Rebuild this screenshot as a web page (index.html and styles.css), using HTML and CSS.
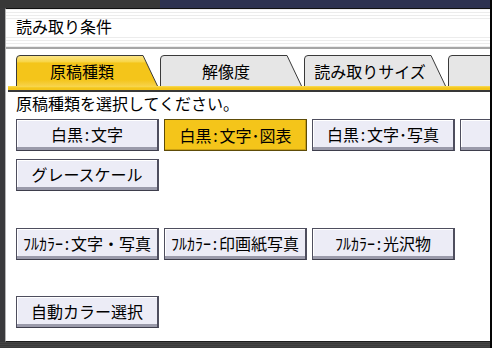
FILE: index.html
```html
<!DOCTYPE html>
<html lang="ja">
<head>
<meta charset="utf-8">
<title>読み取り条件</title>
<link rel="stylesheet" href="styles.css">
</head>
<body>
<div class="screen">
  <div class="topband"></div>
  <div class="window">
    <div class="titlebar">読み取り条件</div>
    <div class="tabbar">
      <div class="tabs">
        <div class="tab active">
          <svg class="tab-shape" width="142" height="31" viewBox="0 0 142 31">
            <defs>
              <linearGradient id="gy" x1="0" y1="0" x2="0" y2="1">
                <stop offset="0" stop-color="#fbe58a"/>
                <stop offset="0.2" stop-color="#f8d64a"/>
                <stop offset="0.25" stop-color="#f4c51a"/>
                <stop offset="0.8" stop-color="#f4c51a"/>
                <stop offset="1" stop-color="#f7d24a"/>
              </linearGradient>
            </defs>
            <path d="M0.5 31 V4 Q0.5 0.5 4 0.5 H127 L141.5 31" fill="url(#gy)" stroke="#3a3a3a" stroke-width="1"/>
          </svg>
          <span class="tab-label">原稿種類</span>
        </div>
        <div class="tab">
          <svg class="tab-shape" width="142" height="31" viewBox="0 0 142 31">
            <path d="M0.5 31 V4 Q0.5 0.5 4 0.5 H127 L141.5 31" fill="#e6e6e6" stroke="#3a3a3a" stroke-width="1"/>
          </svg>
          <span class="tab-label">解像度</span>
        </div>
        <div class="tab">
          <svg class="tab-shape" width="142" height="31" viewBox="0 0 142 31">
            <path d="M0.5 31 V4 Q0.5 0.5 4 0.5 H127 L141.5 31" fill="#e6e6e6" stroke="#3a3a3a" stroke-width="1"/>
          </svg>
          <span class="tab-label">読み取りサイズ</span>
        </div>
        <div class="tab">
          <svg class="tab-shape" width="142" height="31" viewBox="0 0 142 31">
            <path d="M0.5 31 V4 Q0.5 0.5 4 0.5 H127 L141.5 31" fill="#e6e6e6" stroke="#3a3a3a" stroke-width="1"/>
          </svg>
          <span class="tab-label">編集</span>
        </div>
      </div>
      <div class="tabline"></div>
    </div>
    <div class="prompt">原稿種類を選択してください。</div>
    <div class="options">
      <div class="row">
        <div class="btn">白黒<span class="hc">:</span>文字</div>
        <div class="btn selected">白黒<span class="hc">:</span>文字･図表</div>
        <div class="btn">白黒<span class="hc">:</span>文字･写真</div>
        <div class="btn">白黒<span class="hc">:</span>写真</div>
      </div>
      <div class="row row-near">
        <div class="btn">グレースケール</div>
      </div>
      <div class="row row-far">
        <div class="btn">ﾌﾙｶﾗｰ<span class="hc">:</span>文字・写真</div>
        <div class="btn">ﾌﾙｶﾗｰ<span class="hc">:</span>印画紙写真</div>
        <div class="btn">ﾌﾙｶﾗｰ<span class="hc">:</span>光沢物</div>
      </div>
      <div class="row row-far2">
        <div class="btn">自動カラー選択</div>
      </div>
    </div>
  </div>
  <div class="bottomband"></div>
</div>
</body>
</html>
```

FILE: styles.css
```css
html, body {
  margin: 0;
  padding: 0;
}

body {
  width: 492px;
  height: 348px;
  overflow: hidden;
  font-family: "Noto Sans CJK JP", "Noto Sans", sans-serif;
  color: #000;
}

.screen {
  width: 492px;
  height: 348px;
  box-sizing: border-box;
  display: flex;
  flex-direction: column;
  background: #3a3a3c;
  border-right: 2px solid #050505;
}

.topband {
  height: 8px;
  flex: none;
  background: linear-gradient(to right, #383838 0, #383838 160px, #2d3250 160px);
}

.window {
  flex: 1;
  min-height: 0;
  margin-left: 5px;
  border-left: 1px solid #b4b4b4;
  border-top: 1px solid #111;
  border-bottom: 1px solid #1c1c1c;
  background: #fff;
  display: flex;
  flex-direction: column;
  overflow: hidden;
}

.bottomband {
  height: 6px;
  flex: none;
  background: repeating-linear-gradient(to bottom, #444 0, #444 1px, #3a3a3a 1px, #3a3a3a 2px);
}

.titlebar {
  height: 38px;
  box-sizing: content-box;
  padding: 0 10px;
  border-bottom: 2px solid #a6a6a6;
  font-size: 16px;
  line-height: 34px;
  flex: none;
  background:
    repeating-linear-gradient(to bottom, #ececec 0, #ececec 1px, #fff 1px, #fff 3px) top / 100% 10px no-repeat,
    repeating-linear-gradient(to bottom, #ececec 0, #ececec 1px, #fff 1px, #fff 3px) bottom / 100% 10px no-repeat,
    #fff;
}

.tabbar {
  margin: 6px 0 0 2px;
  flex: none;
}

.tabs {
  display: flex;
  gap: 2px;
  padding-left: 8px;
  height: 31px;
}

.tab {
  display: grid;
  width: 142px;
  height: 31px;
  flex: none;
}

.tab > * {
  grid-area: 1 / 1;
}

.tab-shape {
  display: block;
}

.tab-label {
  align-self: center;
  justify-self: center;
  padding-right: 10px;
  font-size: 16px;
  line-height: 20px;
  white-space: nowrap;
}

.tabline {
  height: 4px;
  background: linear-gradient(to bottom, #f9dc5a 0, #f4c51a 2px);
  border-bottom: 2px solid #383838;
}

.prompt {
  margin-top: 1px;
  padding-left: 10px;
  font-size: 16px;
  line-height: 20px;
  white-space: nowrap;
  flex: none;
}

.options {
  display: flex;
  flex-direction: column;
  padding-left: 10px;
  margin-top: 6px;
}

.row {
  display: flex;
  gap: 5px;
}

.row-near {
  margin-top: 8px;
}

.row-far {
  margin-top: 37px;
}

.row-far2 {
  margin-top: 36px;
}

.btn {
  width: 143px;
  height: 32px;
  flex: none;
  box-sizing: border-box;
  display: flex;
  align-items: center;
  justify-content: center;
  padding-bottom: 3px;
  background: #ececf6;
  border-top: 1px solid #4e4e5e;
  border-left: 1px solid #4e4e5e;
  border-right: 2px solid #4e4e5e;
  border-bottom: 1px solid #3e3e4c;
  box-shadow: inset 0 -3px 0 #9a9aaa, inset 1px 1px 0 #fff;
  font-size: 16px;
  line-height: 20px;
  white-space: nowrap;
}

.btn.selected {
  background: #f4c51a;
  border: 1px solid #5e4c08;
  box-shadow: inset -1px -1px 0 #c99f12;
  padding-bottom: 0;
}

.hc {
  display: inline-block;
  width: 8px;
  text-align: center;
}
```
